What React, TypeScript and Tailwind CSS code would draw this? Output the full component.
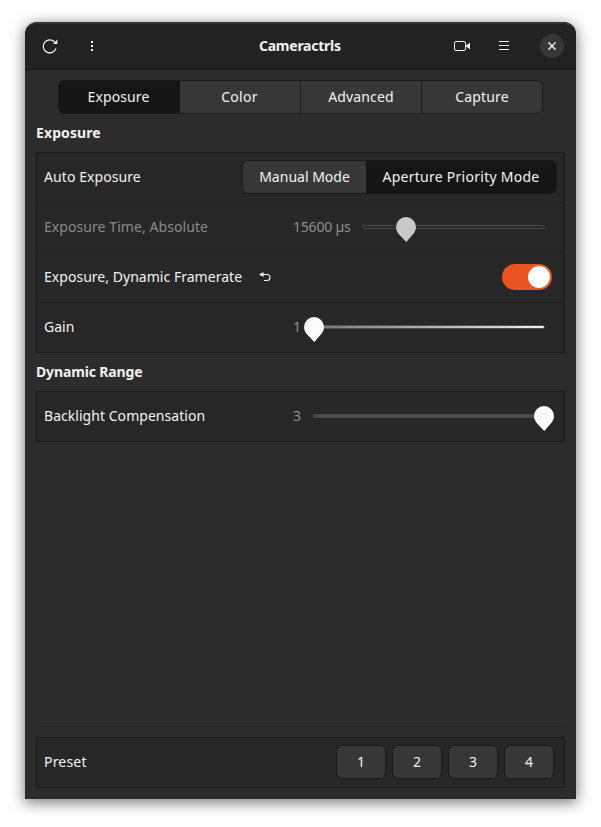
import type { ReactNode } from 'react';

function Track({ className, children }: { className: string; children?: ReactNode }) {
  return <div className={`relative h-1 ${className}`}>{children}</div>;
}

function Knob({ className }: { className: string }) {
  return (
    <svg width="20" height="25" viewBox="0 0 20 25" className={`absolute -top-2 ${className}`}>
      <path
        fill="currentColor"
        d="M10 0A10 10 0 0 1 20 10C20 13.2 18.6 15.7 16.4 18L10.3 25L3.6 18C1.4 15.7 0 13.2 0 10A10 10 0 0 1 10 0Z"
      />
    </svg>
  );
}

function Row({ children, last = false }: { children: ReactNode; last?: boolean }) {
  return (
    <div
      className={`flex items-center pb-px pl-[7px] ${last ? 'h-[49px]' : 'h-[50px] border-b border-[#232323]'}`}
    >
      {children}
    </div>
  );
}

const tab = 'flex items-center justify-center bg-[#373737] border-[#1b1b1b]';

const presets = ['1', '2', '3', '4'];

export default function App() {
  return (
    <div className="h-[827px] w-[601px] overflow-hidden bg-white pt-[22px] pl-[25px] font-['Noto_Sans',sans-serif] text-[14px] leading-5 text-[#f2f2f2]">
      <div className="flex h-[777px] w-[551px] flex-col overflow-hidden rounded-t-[12px] bg-[#2c2c2c] shadow-[0_3px_14px_1px_rgba(0,0,0,0.5)]">
        <header className="flex h-[48px] shrink-0 items-center rounded-t-[12px] border-t-2 border-b border-t-[#343434] border-b-[#191919] bg-[#222222]">
          <svg width="16" height="16" viewBox="0 0 16 16" fill="none" className="relative -top-px ml-[17px]">
            <path d="M14 10.4A6.5 6.5 0 1 1 12.6 4" stroke="#f2f2f2" strokeWidth="1.2" />
            <path d="M15.4 1.6V6H11Z" fill="#f2f2f2" />
          </svg>
          <svg width="2" height="10" viewBox="0 0 2 10" fill="#f2f2f2" className="relative -top-px ml-[33px]">
            <path d="M0 0h2v2H0zM0 4h2v2H0zM0 8h2v2H0z" />
          </svg>
          <h1 className="relative -top-px ml-[166px] w-[100px] font-bold">
            <span className="tracking-[-0.25px]">Cameractrls</span>
          </h1>
          <svg width="17" height="11" viewBox="0 0 17 11" fill="none" className="ml-[95px]">
            <rect x="0.5" y="0.5" width="11" height="9" rx="1.5" stroke="#f2f2f2" />
            <path d="M11.5 5L16 1.5V8.5Z" fill="#f2f2f2" />
          </svg>
          <svg width="10" height="9" viewBox="0 0 10 9" fill="#f2f2f2" className="relative -top-px ml-[28px]">
            <path d="M0 0h10v1H0zM0 4h10v1H0zM0 8h10v1H0z" />
          </svg>
          <div className="relative -top-px ml-[31px] flex size-6 items-center justify-center rounded-full bg-[#373737]">
            <svg width="8" height="8" viewBox="0 0 8 8" fill="none">
              <path d="M0.4 0.4L7.6 7.6M7.6 0.4L0.4 7.6" stroke="#f2f2f2" strokeWidth="1.4" />
            </svg>
          </div>
        </header>

        <main className="flex flex-1 flex-col px-[11px] pt-[10px] pb-[11px]">
          <nav className="ml-[22px] flex h-[34px] w-[485px] overflow-hidden rounded-[6px] border border-[#1b1b1b]">
            <div className="flex w-[121px] items-center justify-center bg-[#151515] pr-[2px]">
              <span className="tracking-[0.1px]">Exposure</span>
            </div>
            <div className={`${tab} w-[121px] border-r pr-[1px] tracking-[0.3px]`}>Color</div>
            <div className={`${tab} w-[121px] border-r tracking-[0.15px]`}>Advanced</div>
            <div className={`${tab} w-[120px] tracking-[0.15px]`}>Capture</div>
          </nav>

          <h2 className="mt-[9px] h-5 font-bold tracking-[0.1px]">Exposure</h2>
          <section className="mt-[9px] border border-[#1a1a1a] bg-[#272727]">
            <Row>
              <span className="tracking-[0.08px]">Auto Exposure</span>
              <div className="mr-[7px] ml-auto flex h-[34px] w-[315px] overflow-hidden rounded-[6px] border border-[#1b1b1b]">
                <div className="flex w-[123px] items-center justify-center bg-[#373737]">Manual Mode</div>
                <div className="flex flex-1 items-center justify-center bg-[#151515]">
                  <span className="tracking-[0.26px]">Aperture Priority Mode</span>
                </div>
              </div>
            </Row>
            <Row>
              <span className="w-[249px] tracking-[0.07px] text-[#8a8a8a]">Exposure Time, Absolute</span>
              <span className="w-[69px] tracking-[-0.2px] text-[#8f8f8f]">15600 µs</span>
              <Track className="w-[183px] rounded-full border border-[#484848]">
                <Knob className="-top-[9px] left-[33px] text-[#c9c9c9]" />
              </Track>
            </Row>
            <Row>
              <span className="w-[215px] tracking-[0.03px]">Exposure, Dynamic Framerate</span>
              <svg width="12" height="10" viewBox="0 0 12 10" fill="none">
                <path d="M3 2.5H8A3 3 0 0 1 8 8.5H5" stroke="#f2f2f2" strokeWidth="1.1" />
                <path d="M0 2.5L4.5 0V5Z" fill="#f2f2f2" />
              </svg>
              <div className="mr-[12px] ml-auto flex h-[26px] w-[50px] justify-end rounded-full bg-[#e95420] p-[2px]">
                <div className="size-[22px] rounded-full bg-white" />
              </div>
            </Row>
            <Row last>
              <span className="w-[249px]">Gain</span>
              <span className="w-[20px] text-[#8f8f8f]">1</span>
              <Track className="w-[232px] rounded-full border border-[#505050] bg-linear-to-r from-[#777777] to-[#f0f0f0]">
                <Knob className="-top-[9px] -left-[10px] text-[#fcfcfc]" />
              </Track>
            </Row>
          </section>

          <h2 className="mt-[9px] h-5 font-bold tracking-[-0.15px]">Dynamic Range</h2>
          <section className="mt-[9px] border border-[#1a1a1a] bg-[#272727]">
            <Row last>
              <span className="w-[249px] tracking-[0.04px]">Backlight Compensation</span>
              <span className="w-[20px] text-[#8f8f8f]">3</span>
              <Track className="w-[232px] rounded-full bg-[#4a4a4a]">
                <Knob className="left-[221px] text-[#fcfcfc]" />
              </Track>
            </Row>
          </section>

          <footer className="mt-auto border-t border-[#292929] pt-[10px]">
            <div className="flex h-[51px] items-center border border-[#1a1a1a] bg-[#272727] pr-[10px] pb-px pl-[7px]">
              <span className="tracking-[0.2px]">Preset</span>
              <div className="ml-auto flex gap-1.5">
                {presets.map((p) => (
                  <button
                    key={p}
                    className="h-[34px] w-[50px] rounded-[6px] border border-[#1b1b1b] bg-[#373737]"
                  >
                    {p}
                  </button>
                ))}
              </div>
            </div>
          </footer>
        </main>
      </div>
    </div>
  );
}
